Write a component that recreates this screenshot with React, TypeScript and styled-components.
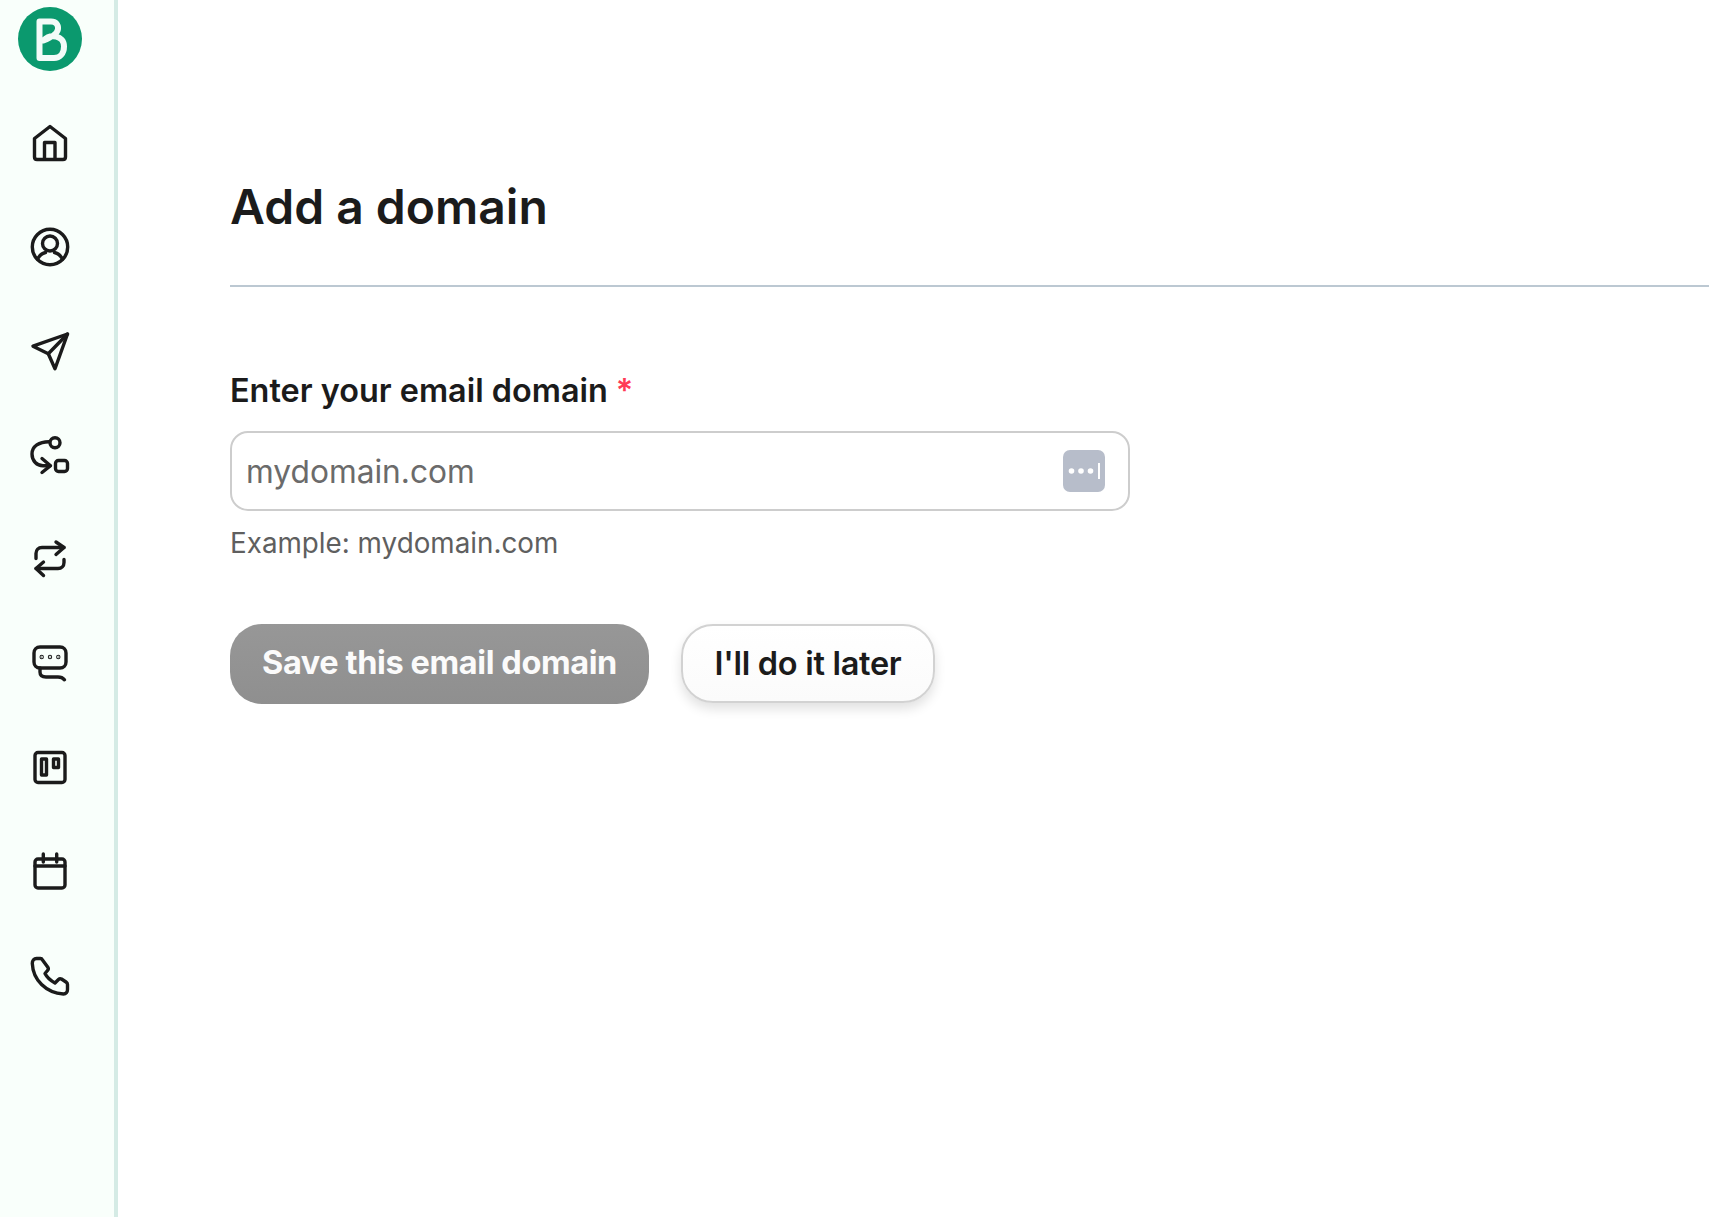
import styled, { createGlobalStyle } from 'styled-components';

const GlobalStyle = createGlobalStyle`
  html, body {
    margin: 0;
    padding: 0;
    background: #ffffff;
  }
  body {
    font-family: Inter, "Noto Sans", "Liberation Sans", sans-serif;
  }
`;

const Page = styled.div`
  display: flex;
  height: 1217px;
  overflow: hidden;
`;

const Sidebar = styled.nav`
  box-sizing: border-box;
  display: flex;
  flex-direction: column;
  align-items: center;
  flex: 0 0 118px;
  height: 100%;
  padding: 7px 14px 0 0;
  background: #f9fffb;
  border-right: 4px solid #d5ebe5;
`;

const Logo = styled.svg`
  display: block;
  width: 64px;
  height: 64px;
  margin-bottom: 48px;
`;

const NavIcon = styled.svg`
  display: block;
  flex: none;
  width: 48px;
  height: 48px;
  margin-bottom: 56px;
  fill: none;
  stroke: #1b1b1b;
  stroke-width: 3.4;
  stroke-linecap: round;
  stroke-linejoin: round;
`;

const Main = styled.main`
  flex: 1;
  min-width: 0;
  padding: 176px 0 0 112px;
`;

const Title = styled.h1`
  margin: 0;
  padding-bottom: 47px;
  border-bottom: 2px solid #bcc8d2;
  font-size: 48px;
  line-height: 62px;
  font-weight: 600;
  color: #1b1b1b;
`;

const Form = styled.form`
  display: flex;
  flex-direction: column;
  align-items: flex-start;
  padding-top: 84px;
`;

const Label = styled.label`
  display: block;
  margin-bottom: 21px;
  font-size: 32.4px;
  line-height: 39px;
  font-weight: 600;
  color: #1b1b1b;
`;

const Required = styled.span`
  margin-left: 8px;
  color: #ff3a55;
`;

const InputBox = styled.div`
  box-sizing: border-box;
  display: flex;
  align-items: center;
  width: 900px;
  height: 80px;
  padding: 0 23px 0 14px;
  border: 2px solid #cdcdcd;
  border-radius: 18px;
  background: #ffffff;
`;

const Input = styled.input`
  flex: 1;
  min-width: 0;
  padding: 0;
  border: 0;
  outline: 0;
  background: transparent;
  font-family: inherit;
  font-size: 31.7px;
  color: #1b1b1b;

  &::placeholder {
    color: #6b6b6b;
    opacity: 1;
  }
`;

const KeyBadge = styled.svg`
  display: block;
  flex: none;
  width: 42px;
  height: 42px;
`;

const Hint = styled.p`
  margin: 15px 0 0;
  font-size: 27.8px;
  line-height: 34px;
  font-weight: 400;
  color: #5f5f5f;
`;

const Actions = styled.div`
  display: flex;
  gap: 32px;
  margin-top: 64px;
`;

const SaveButton = styled.button`
  box-sizing: border-box;
  width: 419px;
  height: 80px;
  padding: 0 0 3px;
  border: 0;
  border-radius: 32px;
  background: linear-gradient(#979797, #8f8f8f);
  font-family: inherit;
  font-size: 32.5px;
  font-weight: 700;
  letter-spacing: -0.4px;
  color: #fbfbfb;
`;

const LaterButton = styled.button`
  box-sizing: border-box;
  width: 254px;
  height: 79px;
  padding: 0 0 1px;
  border: 2px solid #d2d2d2;
  border-radius: 32px;
  background: linear-gradient(#ffffff, #fbfbfb);
  box-shadow: 0 6px 12px rgba(0, 0, 0, 0.12);
  font-family: inherit;
  font-size: 32.5px;
  font-weight: 600;
  letter-spacing: -0.3px;
  color: #1b1b1b;
`;

const App = () => (
  <Page>
    <GlobalStyle />
    <Sidebar>
      <Logo viewBox="0 0 64 64">
        <circle cx="32" cy="32" r="32" fill="#0b996e" />
        <path
          d="M21.5 51V14.5H33C38 14.5 40.5 18 40 22C39.5 27 32 31 25.5 33.5C32 26.5 46 28 46 39.5C46 47 41.5 51 36 51H21.5Z"
          fill="none"
          stroke="#f3fbf8"
          strokeWidth="6"
          strokeLinejoin="round"
        />
      </Logo>

      <NavIcon viewBox="0 0 48 48">
        <path d="M24 7.5L8.5 19.5V38C8.5 39.6 9.4 40.5 11 40.5H37C38.6 40.5 39.5 39.6 39.5 38V19.5L24 7.5Z" />
        <path d="M18.5 40V23.5H29V40" />
      </NavIcon>

      <NavIcon viewBox="0 0 48 48">
        <circle cx="24" cy="24" r="17.7" />
        <circle cx="24" cy="20.5" r="7.5" />
        <path d="M11.5 36C14 31.5 17 30 19.5 29.5M36.5 36C34 31.5 31 30 28.5 29.5" />
      </NavIcon>

      <NavIcon viewBox="0 0 48 48">
        <path d="M41.5 7L7 19.2L22.3 26.8L29 41.8L41.5 7Z" />
        <path d="M22.3 26.8L41.5 7" />
      </NavIcon>

      <NavIcon viewBox="0 0 48 48">
        <circle cx="29" cy="11.7" r="5" />
        <rect x="29.5" y="29.5" width="12" height="11" rx="3" />
        <path d="M23.5 10.7C13 10.5 6 15.5 6 23C6 30 11 34.7 17 34.7H24" />
        <path d="M16 27.5L24.5 34.7L16 41.5" />
      </NavIcon>

      <NavIcon viewBox="0 0 48 48">
        <path d="M38 12.5H16C12.4 12.5 10 15 10 18.5V23.5" />
        <path d="M30 7L38 12.5L30 19.5" />
        <path d="M10 33.5H32C35.6 33.5 38 31 38 27.5V24.5" />
        <path d="M17.5 27L10 33.5L17.5 40.5" />
      </NavIcon>

      <NavIcon viewBox="0 0 48 48">
        <path d="M14 29C10.5 29 8 26.5 8 23V14C8 10.5 10.5 8 14 8H34C37.5 8 40 10.5 40 14V23C40 26.5 37.5 29 34 29H14Z" />
        <path d="M14 29V33C14 36.5 16 38 20 38H32C35 38 37 39 38.5 40.8" />
        <circle cx="15.7" cy="18" r="0.5" fill="#1b1b1b" />
        <circle cx="24" cy="18" r="0.5" fill="#1b1b1b" />
        <circle cx="32.3" cy="18" r="0.5" fill="#1b1b1b" />
      </NavIcon>

      <NavIcon viewBox="0 0 48 48">
        <rect x="9" y="9.5" width="30" height="30" rx="3" />
        <rect x="15.5" y="16" width="5" height="16" />
        <rect x="27.5" y="16" width="5" height="8.5" />
      </NavIcon>

      <NavIcon viewBox="0 0 48 48">
        <rect x="9" y="12" width="30" height="29" rx="3" />
        <path d="M9 19H39" />
        <path d="M17.3 7V15M30.7 7V15" />
      </NavIcon>

      <NavIcon viewBox="0 0 48 48">
        <path d="M10.5 7.5H14.5C15.5 7.5 16 8 16.5 9L22 16.5C22.5 17.5 22.5 18.5 21.5 19.5L19 22.5C21 26.5 24.5 29.5 29 32L32.5 28.5C33.5 27.5 34.5 27.5 35.5 28L40 31C41 31.7 41.5 32.5 41.5 33.5V38.5C41.5 41 40 43 37.5 43C20 42 7 29 6.3 12.5C6.3 9.5 8 7.5 10.5 7.5Z" />
      </NavIcon>
    </Sidebar>

    <Main>
      <Title>Add a domain</Title>
      <Form>
        <Label htmlFor="domain">
          Enter your email domain<Required>*</Required>
        </Label>
        <InputBox>
          <Input id="domain" placeholder="mydomain.com" />
          <KeyBadge viewBox="0 0 42 42">
            <rect width="42" height="42" rx="7" fill="#b7bdca" />
            <circle cx="8.5" cy="21" r="2.8" fill="#ffffff" />
            <circle cx="18" cy="21" r="2.8" fill="#ffffff" />
            <circle cx="27.5" cy="21" r="2.8" fill="#ffffff" />
            <rect x="35" y="13" width="2" height="16" fill="#ffffff" />
          </KeyBadge>
        </InputBox>
        <Hint>Example: mydomain.com</Hint>
        <Actions>
          <SaveButton type="button">Save this email domain</SaveButton>
          <LaterButton type="button">I'll do it later</LaterButton>
        </Actions>
      </Form>
    </Main>
  </Page>
);

export default App;
